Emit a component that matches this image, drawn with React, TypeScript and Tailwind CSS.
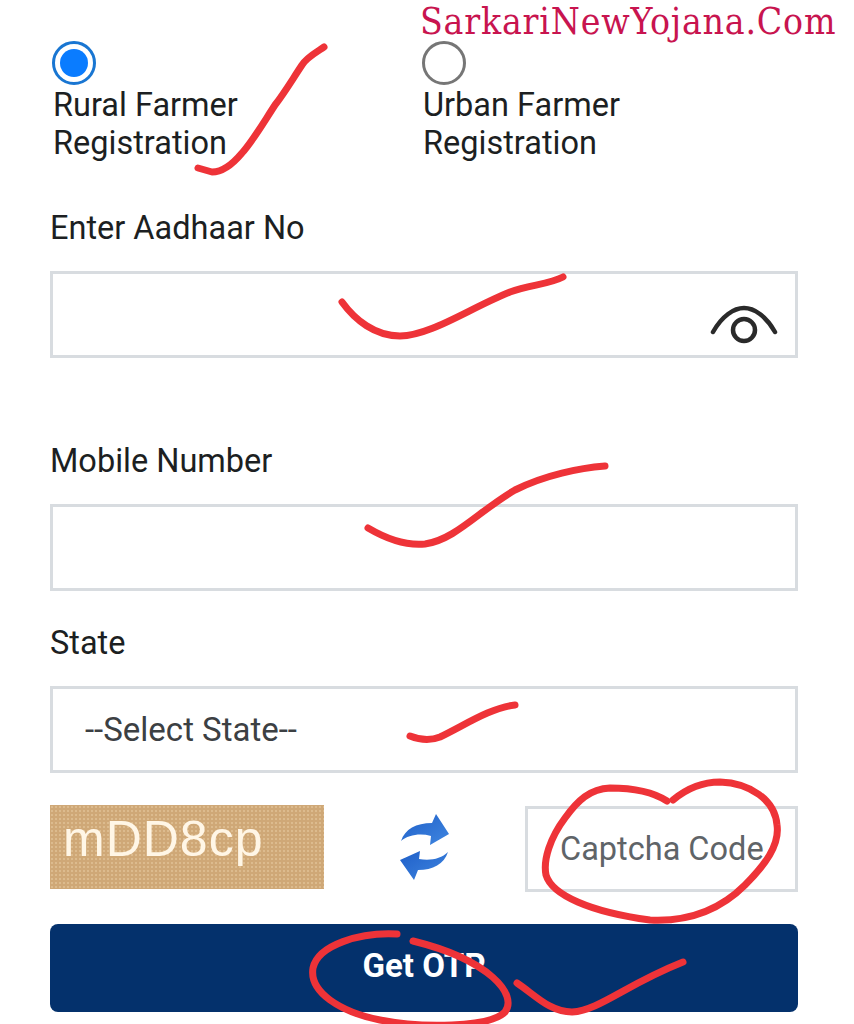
import React from 'react';

const labelText = "text-[32.5px] leading-[38px] text-[#1c1f22]";
const boxClass = "w-full border-[3px] border-[#d8dce0] bg-white outline-none";

function EyeIcon() {
  return (
    <svg width="68" height="40" viewBox="0 0 68 40" fill="none" stroke="#2a2a2a" strokeWidth="4.5" strokeLinecap="round">
      <path d="M3 27 C 12 11, 24 3, 34 3 C 44 3, 56 11, 65 27" />
      <circle cx="34" cy="25" r="11" />
    </svg>
  );
}

function RefreshIcon() {
  return (
    <svg width="50" height="66" viewBox="0 0 50 66">
      <defs>
        <linearGradient id="refreshBlue" x1="0" y1="0" x2="1" y2="1">
          <stop offset="0" stopColor="#1f5fc8" />
          <stop offset="1" stopColor="#3f86e0" />
        </linearGradient>
      </defs>
      <path fill="url(#refreshBlue)" d="M1 27 C 5 15, 16 9, 32 9 L 36 0 L 49 20 L 30 31 L 31 22 C 20 19, 8 21, 1 27 Z" />
      <path fill="url(#refreshBlue)" d="M48 38 C 44 50, 33 56, 18 56 L 14 66 L 0 46 L 20 37 L 19 45 C 30 47, 41 45, 48 38 Z" />
    </svg>
  );
}

// pen marks drawn on top of the form
function Scribbles() {
  return (
    <svg className="absolute inset-0 pointer-events-none" width="854" height="1024" viewBox="0 0 854 1024" fill="none" stroke="#ee3338" strokeWidth="7" strokeLinecap="round" strokeLinejoin="round">
      <path d="M324 47 C 315 53, 306 58, 302 65 C 292 80, 285 92, 275 105 C 262 125, 252 142, 242 153 C 232 165, 222 172, 212 172 L 198 168" />
      <path d="M342 302 C 355 320, 375 336, 400 336 C 430 336, 470 308, 510 292 C 530 285, 550 284, 563 277" />
      <path d="M368 528 C 385 538, 405 546, 425 544 C 455 540, 480 510, 515 490 C 545 475, 580 468, 605 466" />
      <path d="M410 736 C 420 740, 430 741, 440 737 C 465 725, 490 708, 515 705" />
      <path d="M667 801 C 650 790, 630 788, 610 788 C 590 789, 578 800, 565 818 C 550 838, 543 860, 546 875 C 552 895, 590 912, 650 920 C 690 922, 720 910, 745 885 C 765 865, 780 845, 777 825 C 775 800, 750 783, 720 782 C 700 782, 685 790, 673 800" />
      <path d="M397 934 C 360 932, 318 945, 313 968 C 309 992, 340 1012, 380 1020 C 420 1028, 490 1028, 505 1012 C 518 995, 490 960, 413 941" />
      <path d="M517 983 C 535 995, 550 1012, 572 1012 C 600 1010, 625 985, 683 962" />
    </svg>
  );
}

export default function App() {
  return (
    <div className="relative w-[854px] h-[1024px] overflow-hidden bg-white font-['Roboto',sans-serif]">
      <div className="absolute top-0 left-[420px] text-[37px] leading-[44px] tracking-[0.8px] text-[#c8144f] font-['DejaVu_Serif_Condensed','DejaVu_Serif',serif] whitespace-nowrap">
        SarkariNewYojana.Com
      </div>

      <div className="flex flex-col pl-[50px] pr-[56px] pt-[41px]">
        {/* Farmer type */}
        <div className="flex">
          <div className="w-[370px] pl-[2px]">
            <div className="w-[44px] h-[44px] rounded-full border-[3px] border-[#1976d2] flex items-center justify-center">
              <div className="w-[28px] h-[28px] rounded-full bg-[#0a7cff]" />
            </div>
            <div className={`${labelText} mt-[1px] pl-[1px]`}>Rural Farmer<br />Registration</div>
          </div>
          <div className="pl-[2px]">
            <div className="w-[44px] h-[44px] rounded-full border-[3px] border-[#767676]" />
            <div className={`${labelText} mt-[1px] pl-[1px]`}>Urban Farmer<br />Registration</div>
          </div>
        </div>

        {/* Aadhaar */}
        <div className={`${labelText} mt-[47px]`}>Enter Aadhaar No</div>
        <div className={`${boxClass} h-[87px] mt-[24px] flex items-end justify-end pr-[17px] pb-[10px]`}>
          <EyeIcon />
        </div>

        {/* Mobile */}
        <div className={`${labelText} mt-[84px]`}>Mobile Number</div>
        <input className={`${boxClass} h-[87px] mt-[24px]`} />

        {/* State */}
        <div className={`${labelText} mt-[33px]`}>State</div>
        <select className={`${boxClass} h-[87px] mt-[24px] pl-[32px] appearance-none text-[33px] text-[#3c4043]`}>
          <option>--Select State--</option>
        </select>

        {/* Captcha */}
        <div className="flex items-start mt-[32px]">
          <div className="w-[274px] h-[84px] pl-[13px] pt-[9px] bg-[#cfa877] bg-[radial-gradient(#dcbb8e_1px,transparent_1px)] bg-[length:4px_4px] text-[50px] leading-[50px] tracking-[1px] text-[#fff6e6] font-['Liberation_Sans',sans-serif]">
            mDD8cp
          </div>
          <div className="w-[201px] h-[84px] flex items-center justify-center">
            <RefreshIcon />
          </div>
          <input
            placeholder="Captcha Code"
            className="w-[273px] h-[86px] mt-[1px] border-[3px] border-[#d8dce0] bg-white pl-[32px] outline-none text-[32.5px] placeholder:text-[#5f6468]"
          />
        </div>

        <button className="mt-[32px] h-[88px] w-full rounded-[8px] bg-[#04316c] pb-[4px] text-white text-[33px] font-bold">
          Get OTP
        </button>
      </div>

      <Scribbles />
    </div>
  );
}
